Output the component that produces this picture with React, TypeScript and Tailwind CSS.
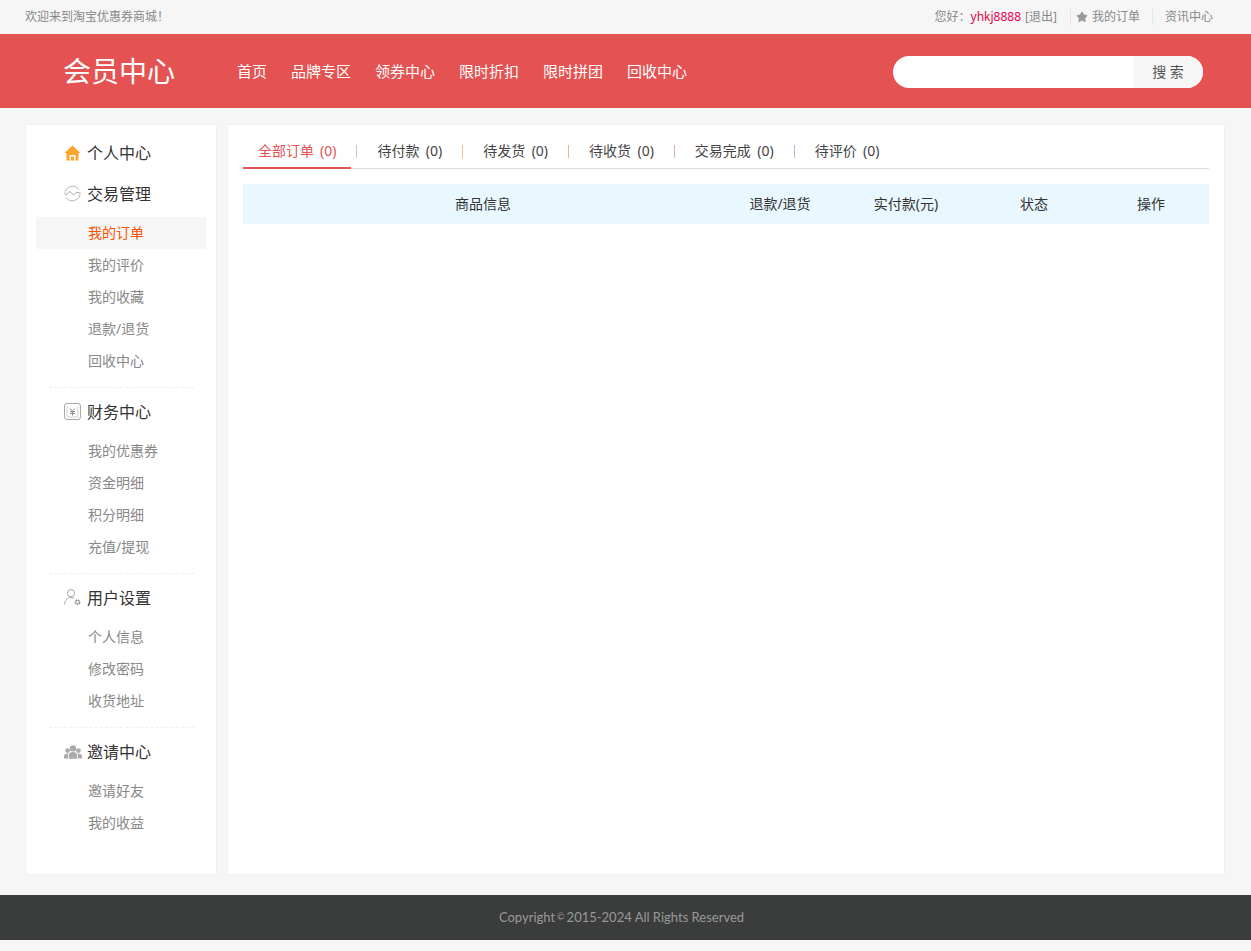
import { Star } from "lucide-react";

const font = "font-['Noto_Sans','Noto_Sans_CJK_SC',sans-serif]";

const navItems = ["首页", "品牌专区", "领券中心", "限时折扣", "限时拼团", "回收中心"];

const tabs = [
  { label: "待付款", sep: "bg-[#b7d2a8]" },
  { label: "待发货", sep: "bg-[#f0c08a]" },
  { label: "待收货", sep: "bg-[#e8b49c]" },
  { label: "交易完成", sep: "bg-[#d8b0c4]" },
  { label: "待评价", sep: "bg-[#aabcd8]" },
];

const columns = [
  { label: "商品信息", w: "w-[480px]" },
  { label: "退款/退货", w: "w-[114px]" },
  { label: "实付款(元)", w: "w-[138px]" },
  { label: "状态", w: "w-[118px]" },
  { label: "操作", w: "w-[116px]" },
];

function HomeIcon() {
  return (
    <svg width="17" height="16" viewBox="0 0 17 16" fill="none">
      <path d="M8.5 0.5 L16.5 8 L14.5 8 L14.5 15.5 L2.5 15.5 L2.5 8 L0.5 8 Z" fill="#ffa42b" />
      <path d="M5.5 15.5 V10 H11.5 V15.5 H10 V11.4 H7 V15.5 Z" fill="#fff" />
    </svg>
  );
}

function TradeIcon() {
  return (
    <svg width="17" height="17" viewBox="0 0 17 17" fill="none" stroke="#b8b8b8" strokeWidth="1">
      <path d="M1 9.5 A7.6 7.6 0 0 1 15 4.8" />
      <path d="M16 7.5 A7.6 7.6 0 0 1 2 12.2" />
      <path d="M1.5 10.5 L6 6.5 L9.5 10 L12.5 7.5 L15.5 7.5" stroke="#a8a8a8" />
    </svg>
  );
}

function MoneyIcon() {
  return (
    <svg width="17" height="17" viewBox="0 0 17 17" fill="none">
      <rect x="0.5" y="0.5" width="16" height="16" rx="2.5" stroke="#a8a8a8" />
      <path d="M3 3 V14 H14 V3" stroke="#d0d0d0" />
      <path d="M6 5.5 L8.5 8.3 L11 5.5 M8.5 8.3 V12.5 M6 8.7 H11 M6 10.5 H11" stroke="#8a8a8a" strokeWidth="1" />
    </svg>
  );
}

function UserIcon() {
  return (
    <svg width="17" height="17" viewBox="0 0 17 17" fill="none" stroke="#a8a8a8" strokeWidth="1">
      <circle cx="7" cy="4.2" r="3.6" />
      <path d="M0.6 15.5 C1 11 3.5 8.6 7 8.6 C8.2 8.6 9.4 9 10.2 9.6" />
      <circle cx="13.5" cy="13.2" r="2" stroke="#909090" strokeWidth="1.7" strokeDasharray="1.7 0.5" />
    </svg>
  );
}

function GroupIcon() {
  return (
    <svg width="18" height="14" viewBox="0 0 18 14" fill="#ababab">
      <circle cx="9" cy="3.4" r="3.2" />
      <path d="M5 13.8 V9.5 C5 8 6.5 7 9 7 C11.5 7 13 8 13 9.5 V13.8 Z" />
      <circle cx="3.6" cy="5.6" r="2.4" />
      <path d="M0 13.4 V11 C0 9.4 1.5 8.4 3.8 8.4 L4.2 8.4 V13.4 Z" />
      <circle cx="14.4" cy="5.6" r="2.4" />
      <path d="M18 13.4 V11 C18 9.4 16.5 8.4 14.2 8.4 L13.8 8.4 V13.4 Z" />
    </svg>
  );
}

const groups = [
  { title: "交易管理", icon: <TradeIcon />, items: ["我的订单", "我的评价", "我的收藏", "退款/退货", "回收中心"] },
  { title: "财务中心", icon: <MoneyIcon />, items: ["我的优惠券", "资金明细", "积分明细", "充值/提现"] },
  { title: "用户设置", icon: <UserIcon />, items: ["个人信息", "修改密码", "收货地址"] },
  { title: "邀请中心", icon: <GroupIcon />, items: ["邀请好友", "我的收益"] },
];

function SideHead({ icon, title }: { icon: React.ReactNode; title: string }) {
  return (
    <div className="flex h-full items-center pl-[38px]">
      <span className="flex w-[23px] justify-start">{icon}</span>
      <span className="text-base leading-none text-[#333]">{title}</span>
    </div>
  );
}

export default function App() {
  return (
    <div className={`${font} min-h-[951px] bg-[#f6f6f6] text-sm`}>
      {/* top bar */}
      <div className="flex h-[34px] items-center justify-between pl-[25px] pr-[38px] text-xs text-[#888]">
        <span>欢迎来到淘宝优惠券商城！</span>
        <div className="flex items-center">
          <span>您好：</span>
          <span className="text-[#e6004c]">yhkj8888</span>
          <span className="ml-[4px]">[退出]</span>
          <span className="ml-[13px] h-4 w-px bg-[#e5e5e5]" />
          <Star size={12} fill="#999" stroke="#999" className="ml-[5px] mr-[4px]" />
          <span>我的订单</span>
          <span className="mx-[12px] h-4 w-px bg-[#e5e5e5]" />
          <span>资讯中心</span>
        </div>
      </div>

      {/* header */}
      <div className="flex h-[74px] items-center bg-[#e45252] pl-[63px]">
        <div className="w-[174px] text-[28px] leading-none text-white">会员中心</div>
        <nav className="mt-[2px] flex gap-6">
          {navItems.map((item) => (
            <a key={item} className="text-[15px] text-white">
              {item}
            </a>
          ))}
        </nav>
        <div className="ml-auto mr-[48px] mt-[2px] flex h-8 w-[310px] overflow-hidden rounded-2xl bg-white">
          <input className="min-w-0 flex-1 outline-none" />
          <button className="w-[70px] bg-[#f6f6f6] text-sm text-[#555]">搜 索</button>
        </div>
      </div>

      {/* body */}
      <div className="flex gap-[10px] pb-5 pl-[25px] pr-[26px] pt-4">
        <aside className="h-[751px] w-[192px] shrink-0 border border-[#f0f0f0] bg-white pt-[11px]">
          <div className="mb-[1px] h-[33px]">
            <SideHead icon={<HomeIcon />} title="个人中心" />
          </div>
          {groups.map((group, i) => (
            <div key={group.title}>
              <div className="h-[47px]">
                <SideHead icon={group.icon} title={group.title} />
              </div>
              <ul className="mx-[10px]">
                {group.items.map((item) => (
                  <li
                    key={item}
                    className={`flex h-8 items-center pl-[52px] ${
                      item === "我的订单" ? "bg-[#f6f6f6] text-[#ff5000]" : "text-[#888]"
                    }`}
                  >
                    {item}
                  </li>
                ))}
              </ul>
              {i < groups.length - 1 && <div className="ml-[23px] mr-[22px] mt-[10px] border-b border-dashed border-[#eee]" />}
            </div>
          ))}
        </aside>

        <main className="h-[751px] flex-1 border border-[#f0f0f0] bg-white px-[15px] pt-[9px]">
          <div className="flex h-[35px] items-center border-b border-[#ddd]">
            <span className="-mb-px flex h-[35px] items-center border-b-2 border-[#e55353] px-[15px] text-[#e55353]">
              全部订单
              <span className="ml-[6px]">(0)</span>
            </span>
            {tabs.map((tab) => (
              <div key={tab.label} className="flex h-full items-center">
                <span className={`h-[13px] w-px ${tab.sep} ${tab.label === "待付款" ? "ml-[5px]" : ""}`} />
                <span className="flex h-[35px] items-center px-[20px] text-[#444]">
                  {tab.label}
                  <span className="ml-[6.4px]">(0)</span>
                </span>
              </div>
            ))}
          </div>
          <div className="mt-[15px] flex h-10 items-center bg-[#e9f8fe] text-[#333]">
            {columns.map((col) => (
              <div key={col.label} className={`${col.w} text-center`}>
                {col.label}
              </div>
            ))}
          </div>
        </main>
      </div>

      {/* footer */}
      <div className="flex h-[45px] items-center justify-center bg-[#3b3d3c] pr-[8px] font-['Lato',sans-serif] text-[13px] text-[#999]">
        Copyright <span className="mx-[2px] text-[9px]">©</span> 2015-2024 All Rights Reserved
      </div>
      <div className="h-[11px]" />
    </div>
  );
}
